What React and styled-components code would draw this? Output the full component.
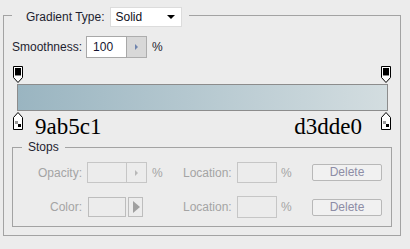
import React from 'react';
import styled, { createGlobalStyle } from 'styled-components';

const GlobalStyle = createGlobalStyle`
  html, body {
    margin: 0;
    padding: 0;
    background: #ececec;
  }
  body {
    font-family: "Liberation Sans", Arial, sans-serif;
    font-size: 12px;
    color: #1e1e30;
  }
`;

const Panel = styled.div`
  width: 410px;
  height: 249px;
  padding-top: 3px;
  box-sizing: border-box;
`;

const Group = styled.fieldset`
  box-sizing: border-box;
  margin: 0 0 0 ${(p) => p.$left}px;
  width: ${(p) => p.$width}px;
  padding: 0 0 ${(p) => p.$bottom}px 0;
  border: 1px solid #a3a3a3;
  min-width: 0;
`;

const Legend = styled.legend`
  display: flex;
  align-items: center;
  gap: 5px;
  margin-left: ${(p) => p.$left}px;
  padding: ${(p) => p.$top}px ${(p) => p.$right}px 0 ${(p) => p.$pad}px;
  line-height: 15px;
  color: #1e1e30;
`;

const Select = styled.div`
  box-sizing: border-box;
  width: 72px;
  height: 20px;
  display: flex;
  align-items: center;
  justify-content: space-between;
  padding: 0 6px 0 5px;
  background: #fff;
  border: 1px solid #dcdcdc;
  color: #101020;
`;

const Caret = styled.span`
  width: 0;
  height: 0;
  border-left: 4px solid transparent;
  border-right: 4px solid transparent;
  border-top: 4px solid #000;
`;

const SmoothRow = styled.div`
  display: flex;
  align-items: center;
  height: 22px;
  margin-top: 9px;
  padding-left: 8px;
`;

const Label = styled.span`
  color: ${(p) => (p.$disabled ? '#a4a4a4' : '#1e1e30')};
  white-space: nowrap;
`;

const NumberInput = styled.div`
  box-sizing: border-box;
  width: ${(p) => p.$width}px;
  height: ${(p) => p.$height}px;
  margin-left: ${(p) => p.$left || 0}px;
  padding-left: 6px;
  display: flex;
  align-items: center;
  background: ${(p) => (p.$disabled ? '#ececec' : '#fff')};
  border: 1px solid ${(p) => (p.$disabled ? '#c6c6c6' : '#a8a8a8')};
  color: #141430;
`;

const Spinner = styled.div`
  box-sizing: border-box;
  width: 20px;
  height: ${(p) => p.$height}px;
  display: flex;
  align-items: center;
  justify-content: center;
  background: ${(p) => (p.$disabled ? '#ececec' : '#d8d8d8')};
  border: 1px solid ${(p) => (p.$disabled ? '#c6c6c6' : '#adadad')};
  border-left: none;
  &::after {
    content: '';
    width: 0;
    height: 0;
    border-top: 3px solid transparent;
    border-bottom: 3px solid transparent;
    border-left: 3px solid ${(p) => (p.$disabled ? '#b8b8b8' : '#6f84ad')};
  }
`;

const Percent = styled.span`
  margin-left: ${(p) => p.$left}px;
  color: ${(p) => (p.$disabled ? '#a4a4a4' : '#1e1e30')};
`;

const MarkerRow = styled.div`
  display: flex;
  justify-content: space-between;
  align-items: flex-start;
  padding: 0 8px 0 9px;
  margin-top: ${(p) => p.$top || 0}px;
  height: ${(p) => p.$height}px;
`;

const GradientBar = styled.div`
  box-sizing: border-box;
  height: 27px;
  margin: 0 12px 0 13px;
  border: 1px solid #8c8c8c;
  background: linear-gradient(to right, #9ab5c1, #d3dde0);
`;

const HexGroup = styled.div`
  display: flex;
  align-items: flex-start;
`;

const Hex = styled.span`
  font-family: "Liberation Serif", "Times New Roman", serif;
  font-size: 23px;
  line-height: 23px;
  margin-top: 3px;
  margin-left: ${(p) => p.$left || 0}px;
  margin-right: ${(p) => p.$right || 0}px;
  color: #000;
`;

const StopsGrid = styled.div`
  display: grid;
  grid-template-columns: 69px 101px 54px 40px 35px 70px;
  grid-template-rows: 21px 22px;
  row-gap: 13px;
  align-items: center;
  margin-top: 7px;
`;

const RightLabel = styled(Label)`
  justify-self: end;
`;

const Cell = styled.div`
  display: flex;
  align-items: center;
  padding-left: ${(p) => p.$left || 0}px;
`;

const ColorBox = styled.div`
  box-sizing: border-box;
  width: 38px;
  height: 20px;
  border: 1px solid #bdbdbd;
`;

const ArrowButton = styled.div`
  box-sizing: border-box;
  width: 15px;
  height: 20px;
  margin-left: 2px;
  display: flex;
  align-items: center;
  justify-content: center;
  border: 1px solid #bdbdbd;
  &::after {
    content: '';
    width: 0;
    height: 0;
    margin-left: 2px;
    border-top: 6px solid transparent;
    border-bottom: 6px solid transparent;
    border-left: 7px solid #a0a0a0;
  }
`;

const DeleteButton = styled.button`
  box-sizing: border-box;
  width: 70px;
  height: 17px;
  padding: 0;
  font-family: "Liberation Sans", Arial, sans-serif;
  font-size: 12px;
  line-height: 15px;
  color: #8d8da6;
  background: #f1f1f1;
  border: 1px solid #b8b8b8;
  border-radius: 2px;
`;

function TopStop() {
  return (
    <svg width="11" height="18" viewBox="0 0 11 18">
      <path d="M0.5 0.5 H9.5 V11.5 L5 16.5 L0.5 11.5 Z" fill="#fff" stroke="#000" />
      <rect x="2" y="2" width="6" height="7" fill="#000" />
      <rect x="2" y="9" width="6" height="1" fill="#8a8a8a" />
    </svg>
  );
}

function BottomStop() {
  return (
    <svg width="11" height="18" viewBox="0 0 11 18">
      <path d="M5 0.5 L9.5 5.5 V17.5 H0.5 V5.5 Z" fill="#fff" stroke="#000" />
      <rect x="2" y="8" width="6" height="7" fill="#fff" />
      <rect x="2" y="9" width="3" height="3" fill="#9a9a9a" />
      <rect x="5" y="12" width="3" height="3" fill="#000" />
    </svg>
  );
}

export default function App() {
  return (
    <>
      <GlobalStyle />
      <Panel>
        <Group $left={3} $width={398} $bottom={8}>
          <Legend $left={8} $pad={14} $right={7} $top={4}>
            <Label>Gradient Type:</Label>
            <Select>
              Solid
              <Caret />
            </Select>
          </Legend>

          <SmoothRow>
            <Label>Smoothness:</Label>
            <NumberInput $width={41} $height={22} $left={4}>100</NumberInput>
            <Spinner $height={22} />
            <Percent $left={5}>%</Percent>
          </SmoothRow>

          <MarkerRow $top={8} $height={18}>
            <TopStop />
            <TopStop />
          </MarkerRow>
          <GradientBar />
          <MarkerRow $top={1} $height={26}>
            <HexGroup>
              <BottomStop />
              <Hex $left={11}>9ab5c1</Hex>
            </HexGroup>
            <HexGroup>
              <Hex $right={19}>d3dde0</Hex>
              <BottomStop />
            </HexGroup>
          </MarkerRow>

          <Group as="fieldset" $left={8} $width={380} $bottom={8} style={{ marginTop: 2 }}>
            <Legend $left={9} $pad={6} $right={6} $top={0}>
              <Label>Stops</Label>
            </Legend>
            <StopsGrid>
              <RightLabel $disabled>Opacity:</RightLabel>
              <Cell $left={5}>
                <NumberInput $disabled $width={40} $height={21} />
                <Spinner $disabled $height={21} />
                <Percent $left={5} $disabled>%</Percent>
              </Cell>
              <Label $disabled>Location:</Label>
              <NumberInput $disabled $width={40} $height={21} />
              <Percent $left={4} $disabled>%</Percent>
              <DeleteButton disabled>Delete</DeleteButton>

              <RightLabel $disabled>Color:</RightLabel>
              <Cell $left={6}>
                <ColorBox />
                <ArrowButton />
              </Cell>
              <Label $disabled>Location:</Label>
              <NumberInput $disabled $width={40} $height={22} />
              <Percent $left={4} $disabled>%</Percent>
              <DeleteButton disabled>Delete</DeleteButton>
            </StopsGrid>
          </Group>
        </Group>
      </Panel>
    </>
  );
}
